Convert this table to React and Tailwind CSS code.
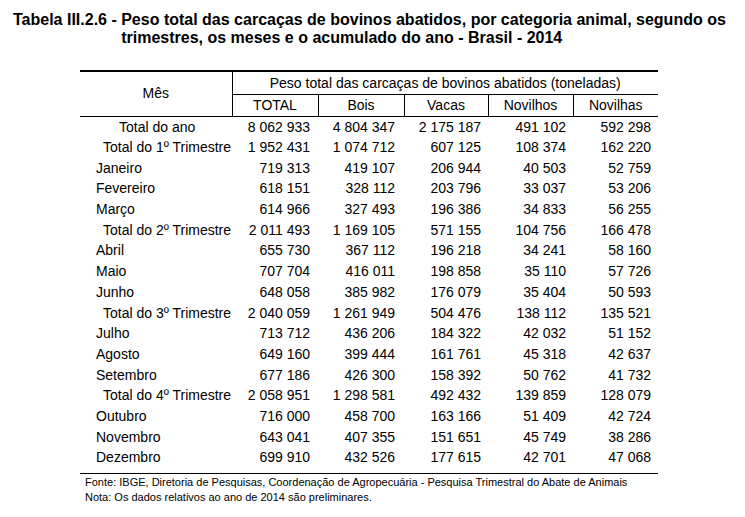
import React from "react";

const rows = [
  ["Total do ano", "8 062 933", "4 804 347", "2 175 187", "491 102", "592 298", "ano"],
  ["Total do 1º Trimestre", "1 952 431", "1 074 712", "607 125", "108 374", "162 220", "tri"],
  ["Janeiro", "719 313", "419 107", "206 944", "40 503", "52 759", "m"],
  ["Fevereiro", "618 151", "328 112", "203 796", "33 037", "53 206", "m"],
  ["Março", "614 966", "327 493", "196 386", "34 833", "56 255", "m"],
  ["Total do 2º Trimestre", "2 011 493", "1 169 105", "571 155", "104 756", "166 478", "tri"],
  ["Abril", "655 730", "367 112", "196 218", "34 241", "58 160", "m"],
  ["Maio", "707 704", "416 011", "198 858", "35 110", "57 726", "m"],
  ["Junho", "648 058", "385 982", "176 079", "35 404", "50 593", "m"],
  ["Total do 3º Trimestre", "2 040 059", "1 261 949", "504 476", "138 112", "135 521", "tri"],
  ["Julho", "713 712", "436 206", "184 322", "42 032", "51 152", "m"],
  ["Agosto", "649 160", "399 444", "161 761", "45 318", "42 637", "m"],
  ["Setembro", "677 186", "426 300", "158 392", "50 762", "41 732", "m"],
  ["Total do 4º Trimestre", "2 058 951", "1 298 581", "492 432", "139 859", "128 079", "tri"],
  ["Outubro", "716 000", "458 700", "163 166", "51 409", "42 724", "m"],
  ["Novembro", "643 041", "407 355", "151 651", "45 749", "38 286", "m"],
  ["Dezembro", "699 910", "432 526", "177 615", "42 701", "47 068", "m"],
];

export default function App() {
  return (
    <div className="w-[745px] h-[517px] bg-white text-black font-['Liberation_Sans',Arial,sans-serif]">
      <div className="flex pt-[11px] pl-[13px] text-[16px] font-bold leading-[18px]">
        <span className="whitespace-pre shrink-0">Tabela III.2.6 - </span>
        <span className="w-[610px] shrink-0">
          Peso total das carcaças de bovinos abatidos, por categoria animal, segundo os trimestres, os meses e o acumulado do ano - Brasil - 2014
        </span>
      </div>

      <div className="ml-[80px] mt-[23px] w-[578px]">
        <table className="w-[578px] border-collapse table-fixed text-[14px]">
          <colgroup>
            <col className="w-[152px]" />
            <col className="w-[86px]" />
            <col className="w-[86px]" />
            <col className="w-[84px]" />
            <col className="w-[85px]" />
            <col className="w-[85px]" />
          </colgroup>
          <thead>
            <tr className="border-t-2 border-black h-[23px]">
              <th rowSpan={2} className="font-normal text-center border-r border-black border-b p-0">
                Mês
              </th>
              <th colSpan={5} className="font-normal text-center border-b border-black p-0 leading-[20px]">
                Peso total das carcaças de bovinos abatidos (toneladas)
              </th>
            </tr>
            <tr className="h-[22px] border-b border-black">
              <th className="font-normal text-center border-r border-black p-0">TOTAL</th>
              <th className="font-normal text-center border-r border-black p-0">Bois</th>
              <th className="font-normal text-center border-r border-black p-0">Vacas</th>
              <th className="font-normal text-center border-r border-black p-0">Novilhos</th>
              <th className="font-normal text-center p-0">Novilhas</th>
            </tr>
          </thead>
          <tbody>
            {rows.map((r, i) => (
              <tr key={i} className="h-[20.7px] leading-[16px]">
                <td
                  className={
                    "p-0 whitespace-nowrap " +
                    (r[6] === "ano" ? "pl-[39px]" : r[6] === "tri" ? "pl-[23px]" : "pl-[16px]")
                  }
                >
                  {r[0]}
                </td>
                <td className="p-0 pr-[8px] text-right whitespace-nowrap">{r[1]}</td>
                <td className="p-0 pr-[9px] text-right whitespace-nowrap">{r[2]}</td>
                <td className="p-0 pr-[7px] text-right whitespace-nowrap">{r[3]}</td>
                <td className="p-0 pr-[7px] text-right whitespace-nowrap">{r[4]}</td>
                <td className="p-0 pr-[7px] text-right whitespace-nowrap">{r[5]}</td>
              </tr>
            ))}
          </tbody>
        </table>
        <div className="h-[6px] border-b border-black"></div>
        <div className="pl-[5px] text-[11px] leading-[15px] pt-[1px]">
          <div>Fonte: IBGE, Diretoria de Pesquisas, Coordenação de Agropecuária - Pesquisa Trimestral do Abate de Animais</div>
          <div>Nota: Os dados relativos ao ano de 2014 são preliminares.</div>
        </div>
      </div>
    </div>
  );
}
